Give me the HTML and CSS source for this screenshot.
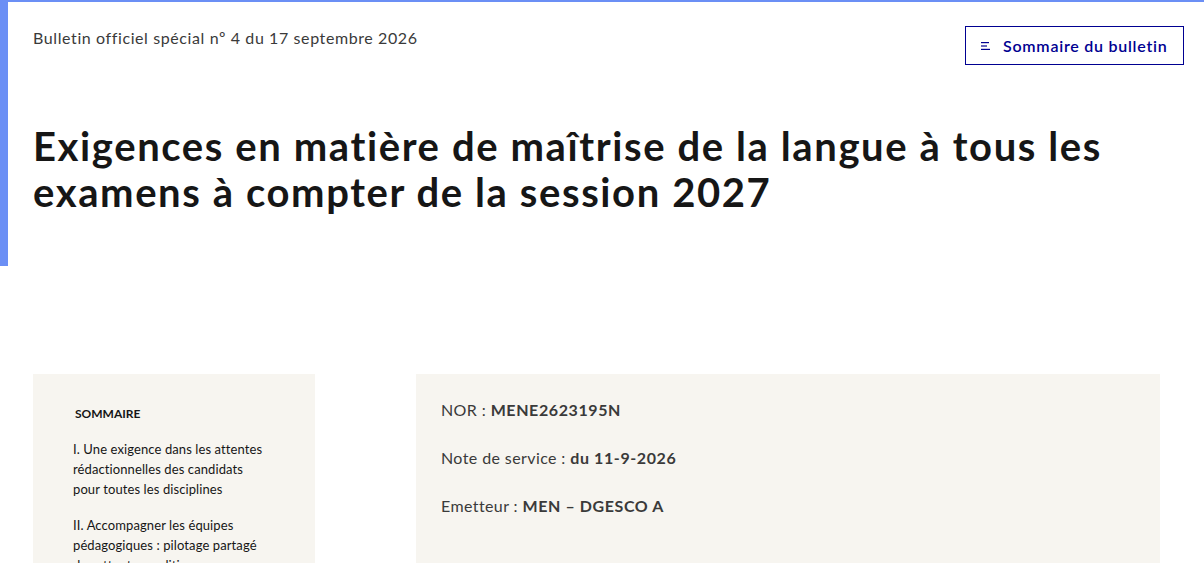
FILE: index.html
```html
<!DOCTYPE html>
<html lang="fr">
<head>
<meta charset="utf-8">
<title>Bulletin officiel</title>
<link rel="stylesheet" href="styles.css">
</head>
<body>
<header class="intro">
  <div class="intro-top">
    <p class="bulletin">Bulletin officiel spécial nº 4 du 17 septembre 2026</p>
    <button class="btn-sommaire" type="button">
      <svg class="menu-icon" viewBox="0 0 9 8" width="9" height="8" aria-hidden="true">
        <rect x="0" y="0" width="8" height="1.2" fill="currentColor"/>
        <rect x="0" y="3.4" width="6" height="1.2" fill="currentColor"/>
        <rect x="0" y="6.8" width="9" height="1.2" fill="currentColor"/>
      </svg>
      <span>Sommaire du bulletin</span>
    </button>
  </div>
  <h1 class="title">Exigences en matière de maîtrise de la langue à tous les examens à compter de la session 2027</h1>
</header>
<main class="content">
  <nav class="toc">
    <p class="toc-title">Sommaire</p>
    <p class="toc-item">I. Une exigence dans les attentes rédactionnelles des candidats pour toutes les disciplines</p>
    <p class="toc-item">II. Accompagner les équipes pédagogiques : pilotage partagé des attentes, politique académique</p>
  </nav>
  <section class="meta">
    <p>NOR : <strong>MENE2623195N</strong></p>
    <p>Note de service : <strong>du 11-9-2026</strong></p>
    <p>Emetteur : <strong>MEN – DGESCO A</strong></p>
  </section>
</main>
</body>
</html>
```

FILE: styles.css
```css
* { box-sizing: border-box; }
html, body { margin: 0; padding: 0; }
body {
  font-family: Lato, "Noto Sans", sans-serif;
  color: #161616;
  background: #fff;
  overflow: hidden;
  height: 563px;
}
.intro {
  border-top: 2px solid #6b8ff5;
  border-left: 8px solid #6b8ff5;
  height: 266px;
  padding: 24px 20px 0 25px;
}
.intro-top {
  display: flex;
  justify-content: space-between;
  align-items: flex-start;
}
.bulletin {
  margin: 0;
  font-size: 16px;
  line-height: 24px;
  letter-spacing: 0.6px;
  color: #3a3a3a;
}
.btn-sommaire {
  display: flex;
  align-items: center;
  gap: 13px;
  height: 39px;
  width: 219px;
  padding: 0 15px;
  border: 1px solid #000091;
  background: #fff;
  color: #000091;
  font-family: inherit;
  font-size: 16px;
  font-weight: 600;
  letter-spacing: 0.75px;
}
.menu-icon { display: block; }
.title {
  margin: 58px 0 0;
  font-size: 40px;
  line-height: 46px;
  font-weight: 700;
  letter-spacing: 1.6px;
  color: #161616;
  max-width: 1120px;
}
.content {
  display: flex;
  align-items: flex-start;
  gap: 101px;
  padding: 108px 44px 0 33px;
}
.toc {
  width: 282px;
  flex: none;
  background: #f7f5f0;
  padding: 32px 50px 0 40px;
  height: 200px;
}
.toc-title {
  margin: 0 0 17px 2px;
  font-size: 12px;
  line-height: 16px;
  font-weight: 700;
  text-transform: uppercase;
}
.toc-item {
  margin: 0 0 16px;
  font-size: 13px;
  line-height: 20px;
  letter-spacing: 0.1px;
}
.meta {
  flex: 1;
  background: #f7f5f0;
  padding: 24px 25px;
  height: 200px;
}
.meta p {
  margin: 0 0 24px;
  font-size: 16px;
  line-height: 24px;
  letter-spacing: 0.4px;
  color: #3a3a3a;
}
.meta strong { font-weight: 700; letter-spacing: 0.6px; }
```
